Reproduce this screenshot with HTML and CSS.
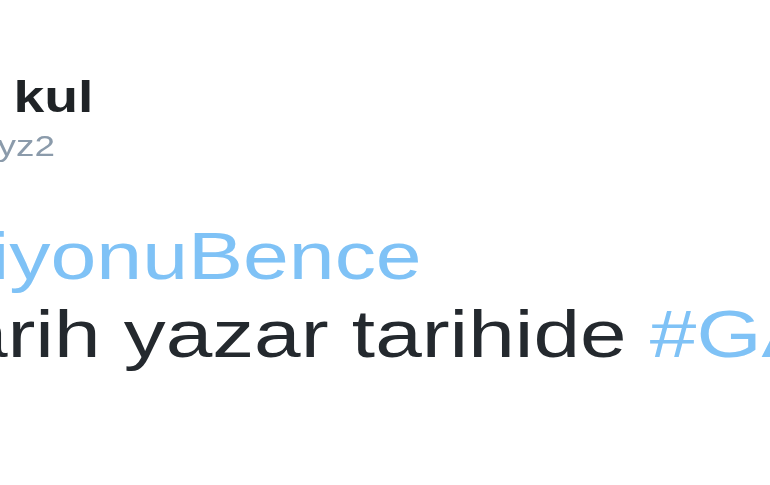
FILE: index.html
```html
<!DOCTYPE html>
<html>
<head>
<meta charset="utf-8">
<link rel="stylesheet" href="styles.css">
    <title>Tweet</title>
</head>
<body>
    <div class="tweet">
        <div class="author">
            <div class="name">kul</div>
            <div class="handle">yz2</div>
        </div>
        <div class="text">
            <div class="line line-first"><span class="tag">iyonuBence</span></div>
            <div class="line line-second">Tarih yazar tarihide <span class="tag">#GALATASARAY</span></div>
        </div>
    </div>
</body>
</html>
```

FILE: styles.css
```css
html, body {
    margin: 0;
    height: 100%;
    overflow: hidden;
    background: #ffffff;
}

body {
    font-family: "Liberation Sans", Arial, sans-serif;
    color: #24292e;
}

.tweet {
    padding-top: 72px;
    white-space: nowrap;
    filter: blur(0.5px);
}

.author {
    transform: scaleX(1.23);
    transform-origin: 0 0;
}

.name {
    font-size: 45px;
    line-height: 50px;
    font-weight: bold;
    color: #1f2326;
    margin-left: 11px;
}

.handle {
    font-size: 30px;
    line-height: 40px;
    color: #8b9bab;
    margin-top: 4px;
    margin-left: -2px;
}

.text {
    margin-top: 51px;
}

.line {
    font-size: 67px;
    line-height: 78px;
    transform-origin: 0 0;
}

.line-first {
    margin-left: -9px;
    transform: scaleX(1.23);
}

.line-second {
    margin-left: -81.5px;
    transform: scaleX(1.25);
}

.tag {
    color: #7fc2f6;
}
```
